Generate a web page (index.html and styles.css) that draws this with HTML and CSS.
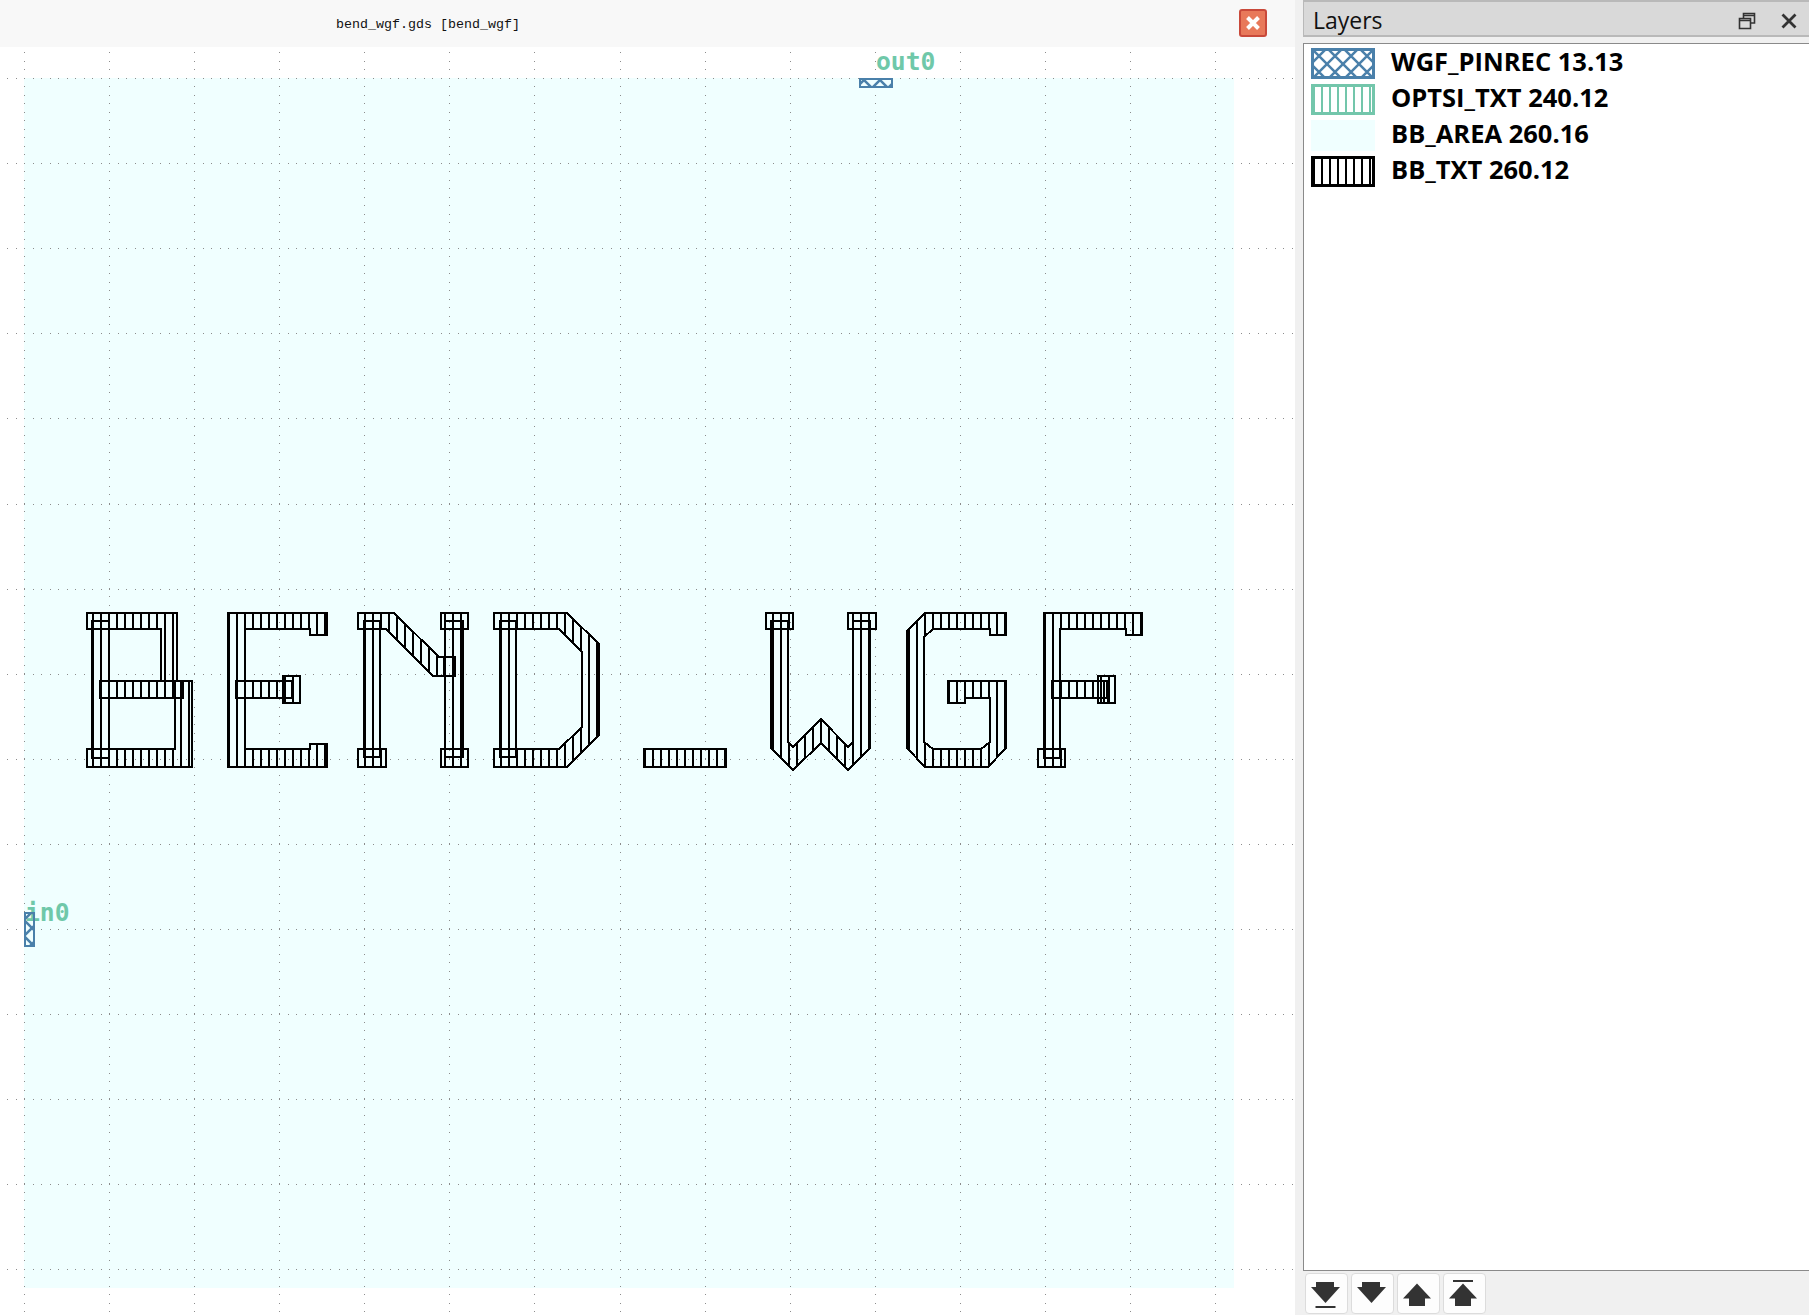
FILE: index.html
```html
<!DOCTYPE html>
<html lang="en">
<head>
<meta charset="utf-8">
<title>bend_wgf.gds [bend_wgf]</title>
<link rel="stylesheet" href="styles.css">
</head>
<body>
<div class="app">
  <main class="view">
    <header class="tabbar">
      <span class="tabtitle">bend_wgf.gds [bend_wgf]</span>
      <button class="tabclose" aria-label="Close">
        <svg width="18" height="18" viewBox="0 0 18 18"><path class="closex" d="M3.500 3.500 14.500 14.500M14.500 3.500 3.500 14.500"/></svg>
      </button>
    </header>
    <svg class="canvas" width="1295" height="1268" viewBox="0 47 1295 1268">
      <defs>
        <pattern id="v" width="8" height="8" patternUnits="userSpaceOnUse"><rect x="4" width="2" height="8" fill="#000"/></pattern>
        <pattern id="x" width="16" height="16" patternUnits="userSpaceOnUse"><path d="M-1 -1 17 17M-1 17 17 -1" stroke="#4a80aa" stroke-width="2.5" fill="none"/></pattern>
      </defs>
      <rect class="bbarea" x="24" y="78" width="1210" height="1210"/>
      <g class="gridlines">
        <line x1="7" x2="1295" y1="78.5" y2="78.5"/><line x1="7" x2="1295" y1="163.6" y2="163.6"/><line x1="7" x2="1295" y1="248.7" y2="248.7"/><line x1="7" x2="1295" y1="333.8" y2="333.8"/><line x1="7" x2="1295" y1="418.9" y2="418.9"/>
        <line x1="7" x2="1295" y1="504" y2="504"/><line x1="7" x2="1295" y1="589.1" y2="589.1"/><line x1="7" x2="1295" y1="674.2" y2="674.2"/><line x1="7" x2="1295" y1="759.3" y2="759.3"/><line x1="7" x2="1295" y1="844.4" y2="844.4"/>
        <line x1="7" x2="1295" y1="929.5" y2="929.5"/><line x1="7" x2="1295" y1="1014.6" y2="1014.6"/><line x1="7" x2="1295" y1="1099.7" y2="1099.7"/><line x1="7" x2="1295" y1="1184.8" y2="1184.8"/><line x1="7" x2="1295" y1="1269.9" y2="1269.9"/>
        <line y1="52" y2="1315" x1="24.5" x2="24.5"/><line y1="52" y2="1315" x1="109.6" x2="109.6"/><line y1="52" y2="1315" x1="194.6" x2="194.6"/><line y1="52" y2="1315" x1="279.7" x2="279.7"/><line y1="52" y2="1315" x1="364.8" x2="364.8"/>
        <line y1="52" y2="1315" x1="449.9" x2="449.9"/><line y1="52" y2="1315" x1="534.9" x2="534.9"/><line y1="52" y2="1315" x1="620" x2="620"/><line y1="52" y2="1315" x1="705.1" x2="705.1"/><line y1="52" y2="1315" x1="790.1" x2="790.1"/>
        <line y1="52" y2="1315" x1="875.2" x2="875.2"/><line y1="52" y2="1315" x1="960.3" x2="960.3"/><line y1="52" y2="1315" x1="1045.3" x2="1045.3"/><line y1="52" y2="1315" x1="1130.4" x2="1130.4"/><line y1="52" y2="1315" x1="1215.5" x2="1215.5"/>
      </g>
      <text class="pinlabel" x="876" y="70">out0</text>
      <text class="pinlabel" x="25" y="921">in0</text>
      <g class="pin" fill="url(#x)">
        <rect x="860" y="79" width="32" height="8"/>
        <rect x="25" y="913" width="9" height="33"/>
      </g>
      <g class="glyphs" fill="url(#v)">
        <!-- B -->
        <path d="M87 613H177V681H161V629H87Z"/>
        <rect x="92" y="621" width="17" height="137"/>
        <rect x="100" y="681" width="83" height="17"/>
        <path d="M175 681H192V767H87V749H175Z"/>
        <!-- E -->
        <path d="M228 613H327V635H310V629H245V749H310V744H327V767H228Z"/>
        <rect x="236" y="681" width="56" height="17"/>
        <rect x="283" y="676" width="17" height="27"/>
        <!-- N -->
        <rect x="358" y="749" width="28" height="18"/>
        <rect x="364" y="621" width="16" height="136"/>
        <path d="M358 613H394L439 657H455V676H433L386 629H358Z"/>
        <rect x="445" y="621" width="18" height="136"/>
        <rect x="441" y="613" width="27" height="16"/>
        <rect x="441" y="749" width="27" height="18"/>
        <rect x="444" y="657" width="11" height="19"/>
        <!-- D -->
        <rect x="500" y="621" width="16" height="136"/>
        <path d="M494 613H567L599 644V735L567 767H494V749H559L582 727V652L559 629H494Z"/>
        <!-- _ -->
        <rect x="644" y="749" width="82" height="18"/>
        <!-- W -->
        <rect x="766" y="613" width="27" height="16"/>
        <rect x="848" y="613" width="28" height="16"/>
        <path d="M771 621H788V742L793 747L821 719L848 747L853 742V621H870V748L848 770L821 743L793 770L771 748Z"/>
        <!-- G -->
        <path d="M925 613H1006V635H990V629H933L924 637V742L933 749H981L990 742V698H965V703H948V681H1006V748L988 767H925L907 748V631Z"/>
        <!-- F -->
        <path d="M1044 613H1142V635H1126V629H1060V758H1044Z"/>
        <rect x="1038" y="749" width="27" height="18"/>
        <rect x="1052" y="681" width="55" height="17"/>
        <rect x="1098" y="676" width="17" height="27"/>
        <rect x="1104" y="681" width="4" height="22"/>
      </g>
    </svg>
  </main>
  <aside class="dock">
    <div class="docktitle">
      <span class="docklabel">Layers</span>
      <svg class="dockicon" width="18" height="18" viewBox="0 0 18 18"><path class="dockfloat" d="M5.500 6V1.500H16.500V11H12.500M1.500 6.500H12.500V16.500H1.500ZM1.500 8.500H12.500M5.500 3.500H16.500"/></svg>
      <svg class="dockicon dockclose" width="16" height="16" viewBox="0 0 16 16"><path class="dockx" d="M1.500 1.500 14.500 14.500M14.500 1.500 1.500 14.500"/></svg>
    </div>
    <ul class="layers">
      <li class="layer">
        <svg class="swatch" width="64" height="31" viewBox="0 0 64 31"><rect class="swborder blue" x="1.500" y="1.500" width="61" height="28" fill="url(#x)"/></svg>
        <span class="layername">WGF_PINREC 13.13</span>
      </li>
      <li class="layer">
        <svg class="swatch" width="64" height="31" viewBox="0 0 64 31"><defs><pattern id="vg" width="8" height="8" patternUnits="userSpaceOnUse"><rect x="2" width="2" height="8" fill="#73c6ab"/></pattern></defs><rect class="swborder green" x="1.500" y="1.500" width="61" height="28" fill="url(#vg)"/></svg>
        <span class="layername">OPTSI_TXT 240.12</span>
      </li>
      <li class="layer">
        <svg class="swatch" width="64" height="31" viewBox="0 0 64 31"><rect class="swarea" width="64" height="31"/></svg>
        <span class="layername">BB_AREA 260.16</span>
      </li>
      <li class="layer">
        <svg class="swatch" width="64" height="31" viewBox="0 0 64 31"><defs><pattern id="vk" width="8" height="8" patternUnits="userSpaceOnUse"><rect x="2" width="2" height="8" fill="#000"/></pattern></defs><rect class="swborder black" x="1.500" y="1.500" width="61" height="28" fill="url(#vk)"/></svg>
        <span class="layername">BB_TXT 260.12</span>
      </li>
    </ul>
    <div class="toolbar">
      <button class="toolbtn" aria-label="Move to bottom"><svg width="41" height="39" viewBox="0 0 41 39"><path class="ti" d="M10 8H28V13H34L19.500 29 5 13H10ZM9.500 32H29.500V34H9.500Z"/></svg></button>
      <button class="toolbtn" aria-label="Move down"><svg width="41" height="39" viewBox="0 0 41 39"><path class="ti" d="M10 8H28V13H34L19.500 29 5 13H10Z"/></svg></button>
      <button class="toolbtn" aria-label="Move up"><svg width="41" height="39" viewBox="0 0 41 39"><path class="ti" d="M19 9.500 33 24.500H27V32H11V24.500H5Z"/></svg></button>
      <button class="toolbtn" aria-label="Move to top"><svg width="41" height="39" viewBox="0 0 41 39"><path class="ti" d="M19 9.500 33 24.500H27V32H11V24.500H5ZM9 6H29V8H9Z"/></svg></button>
    </div>
  </aside>
</div>
</body>
</html>
```
FILE: styles.css
```css
* { box-sizing: border-box; }
html, body { margin: 0; padding: 0; height: 100%; background: #f0f0f0; overflow: hidden; }
.app { display: flex; width: 1809px; height: 1315px; }
.view { width: 1295px; display: flex; flex-direction: column; background: #fff; }
.tabbar { height: 47px; flex: none; background: #f8f8f8; display: flex; align-items: center; padding-left: 336px; padding-right: 28px; }
.tabtitle { font-family: "Liberation Mono", monospace; font-size: 13.33px; color: #111; padding-top: 2px; }
.tabclose { margin-left: auto; margin-bottom: 1px; width: 28px; height: 28px; padding: 0; border: 2px solid #c9493a; border-radius: 3px; background: #e8795a; display: flex; align-items: center; justify-content: center; }
.closex { stroke: #fff; stroke-width: 4; fill: none; }
.canvas { display: block; flex: 1; }
.bbarea { fill: #f0ffff; }
.gridlines line { stroke: #8c8c8c; stroke-width: 1; stroke-dasharray: 1 7.507; shape-rendering: crispEdges; }
.pinlabel { font-family: "DejaVu Sans Mono", monospace; font-weight: 700; font-size: 24.7px; fill: #6fc8a9; }
.pin > * { stroke: #4a80aa; stroke-width: 2.5; shape-rendering: crispEdges; }
.glyphs > * { stroke: #000; stroke-width: 2; shape-rendering: crispEdges; }
.dock { flex: 1; min-width: 0; display: flex; flex-direction: column; padding-left: 8px; }
.docktitle { height: 37px; flex: none; background: #d9d9d9; border-top: 2px solid #b9b9b9; border-bottom: 2px solid #b9b9b9; border-left: 1px solid #b9b9b9; display: flex; align-items: center; padding: 2px 12px 0 9px; }
.docklabel { font-family: "Open Sans", sans-serif; font-size: 23px; color: #111; margin-right: auto; }
.dockicon { display: block; margin-top: 3px; }
.dockclose { margin-left: 25px; }
.dockfloat { fill: none; stroke: #333; stroke-width: 1.6; }
.dockx { fill: none; stroke: #333; stroke-width: 2.8; }
.layers { flex: 1; list-style: none; margin: 6px 0 0; padding: 4px 0 0 7px; background: #fff; border: 1px solid #8a8a8a; border-right: 0; display: flex; flex-direction: column; gap: 5px; }
.layer { height: 31px; display: flex; align-items: center; gap: 16px; font-family: "Open Sans", sans-serif; font-weight: 700; font-size: 25.5px; color: #000; white-space: nowrap; }
.layername { padding-bottom: 6px; }
.swatch { display: block; flex: none; }
.swborder { stroke-width: 3; shape-rendering: crispEdges; }
.blue { stroke: #4a80aa; }
.green { stroke: #73c6ab; }
.black { stroke: #000; }
.swarea { fill: #f0ffff; }
.toolbar { height: 44px; flex: none; display: flex; gap: 3px; padding: 2px 0 1px 2px; }
.toolbtn { width: 43px; height: 41px; padding: 0; border: 1px solid #dcdcdc; border-radius: 4px; background: #fdfdfd; }
.toolbtn svg { display: block; }
.ti { fill: #333; }
```
